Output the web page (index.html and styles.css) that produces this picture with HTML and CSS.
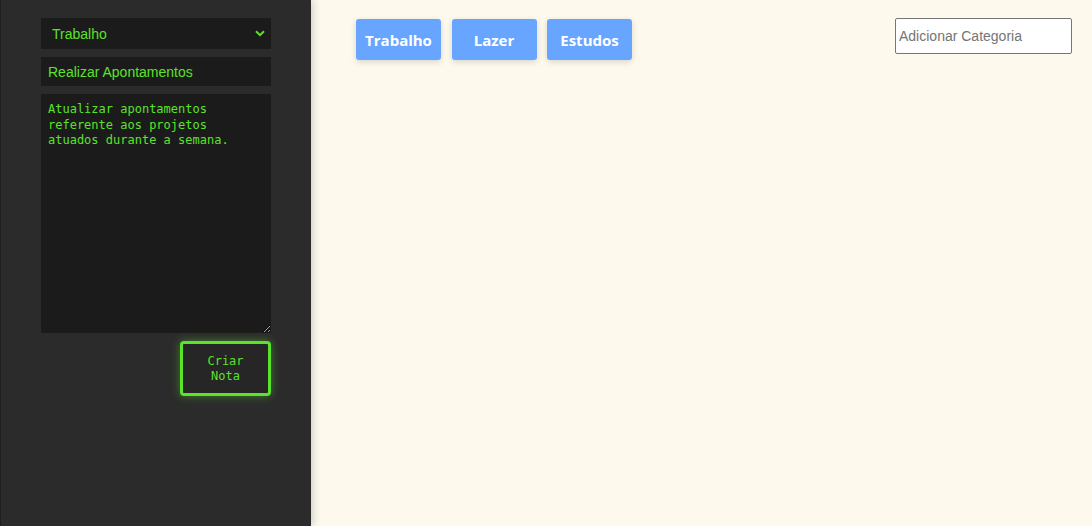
FILE: index.html
```html
<!DOCTYPE html>
<html lang="pt">
<head>
<meta charset="utf-8">
<link rel="stylesheet" href="styles.css">
</head>
<body>
<div class="app">
  <aside class="sidebar">
    <form class="note-form">
      <div class="select-wrap">
        <select class="field select">
          <option>Trabalho</option>
          <option>Lazer</option>
          <option>Estudos</option>
        </select>
        <svg class="chev" width="10" height="7" viewBox="0 0 10 7"><path d="M1 1.2 L5 5.2 L9 1.2" fill="none" stroke="#5be22b" stroke-width="2"/></svg>
      </div>
      <input class="field title" type="text" value="Realizar Apontamentos">
      <textarea class="field body-text">Atualizar apontamentos referente aos projetos atuados durante a semana.</textarea>
      <div class="actions">
        <button type="button" class="create">Criar Nota</button>
      </div>
    </form>
  </aside>
  <main class="main">
    <div class="categories">
      <button class="cat">Trabalho</button>
      <button class="cat">Lazer</button>
      <button class="cat">Estudos</button>
    </div>
    <input class="new-cat" type="text" placeholder="Adicionar Categoria">
  </main>
</div>
</body>
</html>
```

FILE: styles.css
```css
* { box-sizing: border-box; }
html, body { margin: 0; height: 100%; }
body { background: #fef9ed; font-family: "Liberation Sans", Arial, sans-serif; }
.app { display: flex; height: 100vh; }
.sidebar {
  width: 311px;
  flex: none;
  background: #2b2b2b;
  border-left: 1px solid #1f1f1f;
  box-shadow: 2px 0 8px rgba(0,0,0,0.18);
  padding: 18px 40px 0 40px;
  position: relative;
  z-index: 1;
}
.note-form { display: flex; flex-direction: column; gap: 8px; width: 230px; }
.field {
  display: block;
  width: 100%;
  background: #1b1b1b;
  color: #5be22b;
  border: none;
  outline: none;
  border-radius: 0;
  margin: 0;
}
.select-wrap { position: relative; }
.select {
  height: 31px;
  appearance: none;
  -webkit-appearance: none;
  font-family: "Liberation Sans", Arial, sans-serif;
  font-size: 14px;
  padding: 0 0 0 11px;
}
.chev { position: absolute; right: 6px; top: 12px; }
.title {
  height: 29px;
  font-family: "Liberation Sans", Arial, sans-serif;
  font-size: 14px;
  padding: 0 7px;
}
.body-text {
  height: 239px;
  resize: vertical;
  font-family: "DejaVu Sans Mono", "Liberation Mono", monospace;
  font-size: 12px;
  line-height: 15.5px;
  padding: 8px 7px 6px;
}
.actions { display: flex; justify-content: flex-end; }
.create {
  width: 91px;
  height: 55px;
  background: #262626;
  color: #5be22b;
  border: 3px solid #5be22b;
  border-radius: 4px;
  box-shadow: 0 0 10px rgba(91,226,43,0.45);
  font-family: "DejaVu Sans Mono", "Liberation Mono", monospace;
  font-size: 12px;
  line-height: 15px;
  padding: 1px 18px 0;
  cursor: pointer;
}
.main {
  flex: 1;
  display: flex;
  justify-content: space-between;
  align-items: flex-start;
  padding: 18px 20px 0 45px;
}
.categories { display: flex; gap: 10.5px; padding-top: 1px; }
.cat {
  height: 41px;
  width: 85px;
  padding: 0;
  background: #68a5ff;
  color: #fff;
  border: none;
  border-radius: 3px;
  box-shadow: 0 2px 6px rgba(0,0,0,0.15);
  font-family: "Open Sans", "Noto Sans", sans-serif;
  font-weight: 700;
  font-size: 15px;
  cursor: pointer;
}
.new-cat {
  width: 177px;
  height: 36px;
  border: 1px solid #767676;
  border-radius: 2px;
  background: #fff;
  padding: 0 3px;
  font-family: "Liberation Sans", Arial, sans-serif;
  font-size: 14px;
}
.new-cat::placeholder { color: #757575; }
```
